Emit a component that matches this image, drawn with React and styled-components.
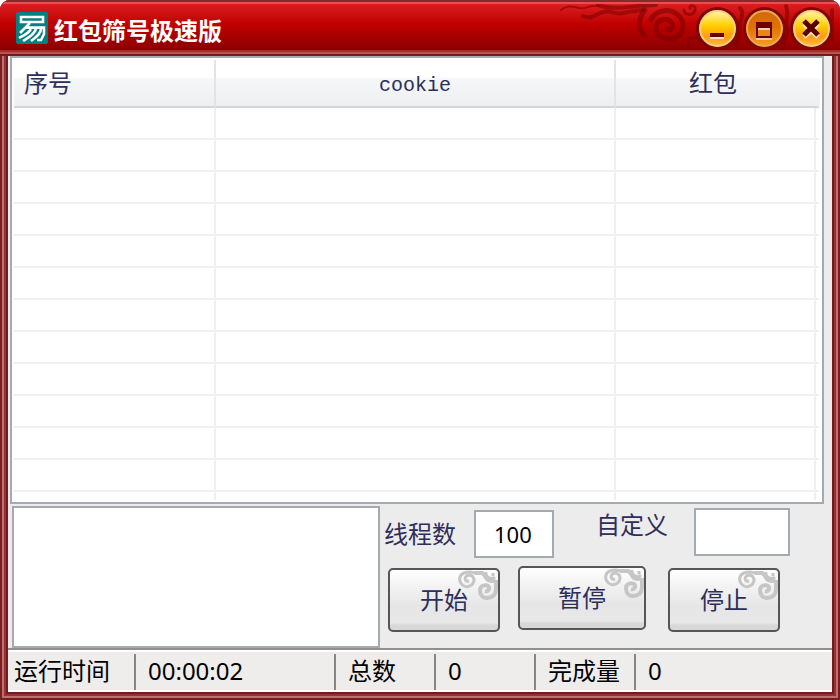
import React, { useState } from 'react';
import styled, { createGlobalStyle } from 'styled-components';

const GlobalStyle = createGlobalStyle`
  *, *::before, *::after {
    box-sizing: border-box;
  }

  body {
    margin: 0;
    background: #fff;
    font-family: 'Noto Sans', 'Noto Sans CJK SC', sans-serif;
  }
`;

const Window = styled.div`
  display: flex;
  flex-direction: column;
  min-height: 100vh;
  padding: 0 8px 8px;
  border-radius: 10px 10px 0 0;
  background: #ececec;
  box-shadow:
    inset 0 0 0 2px #7a1f21,
    inset 0 0 0 4px #bd7072,
    inset 0 0 0 6px #943234,
    inset 0 0 0 8px #741b1d;
`;

const TitleBar = styled.header`
  position: relative;
  display: flex;
  align-items: center;
  gap: 6px;
  height: 56px;
  margin: 0 -8px;
  padding: 0 10px 0 16px;
  border-radius: 10px 10px 0 0;
  overflow: hidden;
  background: linear-gradient(
    #862a2a 0 2px,
    #e25050 2px 4px,
    #d92020 4px,
    #c00000 24px,
    #8c0000 50px,
    #a62c2c 50px 52px,
    #b95353 52px 54px,
    #741b1d 54px
  );
`;

const Ornament = styled.svg`
  position: absolute;
  top: 4px;
  right: 0;
`;

const Title = styled.h1`
  flex: 1;
  margin: 0;
  padding-top: 6px;
  color: #fff;
  font-size: 24px;
  font-weight: 700;
  line-height: 32px;
`;

const WindowButtons = styled.div`
  position: relative;
  display: flex;
  gap: 10px;
`;

const RoundButton = styled.button`
  width: 37px;
  height: 37px;
  padding: 0;
  border: 2px solid ${props => (props.$dim ? '#f0a850' : '#ffd080')};
  border-radius: 50%;
  background: ${props => props.$dim
    ? 'linear-gradient(#d06a10, #e07000 45%, #f59a20)'
    : 'linear-gradient(#fff3a0, #ffd000 40%, #ff9a10 75%, #ffb840)'};
  box-shadow: 0 0 0 3px #7c0808;

  svg {
    display: block;
  }
`;

const ListPanel = styled.section`
  margin: 0 8px 2px 2px;
  padding: 2px;
  border: 2px solid #a3abb1;
  background: #fff;
`;

const List = styled.table`
  width: 100%;
  height: 440px;
  border-collapse: separate;
  border-spacing: 0;
  table-layout: fixed;
`;

const HeadCell = styled.th`
  height: 48px;
  padding: 6px ${props => (props.$last ? '18px' : '10px')} 0 10px;
  border-right: 2px solid ${props => (props.$last ? 'transparent' : '#e4e4e4')};
  border-bottom: 2px solid #d5d5d5;
  background: linear-gradient(#fff 0 18px, #f6f7f9 18px, #eeeff1);
  color: #2e2e5a;
  font-family: 'Liberation Mono', 'Noto Sans CJK SC', monospace;
  font-size: ${props => (props.$latin ? '20px' : '24px')};
  font-weight: 400;
  line-height: 32px;
  text-align: ${props => props.$align || 'center'};
`;

const Cell = styled.td`
  height: 32px;
  padding: 0;
  border-right: 2px solid ${props => (props.$open ? 'transparent' : '#f0f0f0')};
  border-bottom: 2px solid #f0f0f0;
`;

const TailCell = styled(Cell)`
  height: 8px;
  border-bottom: 0;
`;

const Panel = styled.section`
  display: flex;
  gap: 4px;
  padding-left: 4px;
`;

const Log = styled.textarea`
  flex: 0 1 368px;
  height: 142px;
  border: 2px solid #a3abb1;
  background: #fff;
  resize: none;
  outline: none;
`;

const Controls = styled.form`
  flex: 1;
  display: flex;
  flex-direction: column;
  gap: 8px;
  padding-top: 2px;
`;

const FieldRow = styled.div`
  display: flex;
  align-items: flex-end;
  gap: 42px;
  height: 50px;
`;

const Field = styled.div`
  display: flex;
  align-items: ${props => (props.$raised ? 'flex-start' : 'center')};
  align-self: ${props => (props.$raised ? 'flex-start' : 'auto')};
  gap: ${props => (props.$raised ? '26px' : '18px')};
`;

const Label = styled.label`
  color: #2e2e5a;
  font-size: 24px;
  line-height: 34px;
`;

const TextBox = styled.input`
  width: ${props => props.$width};
  height: 48px;
  padding: 0 18px;
  border: 2px solid #a3abb1;
  background: #fff;
  color: #000;
  font-family: inherit;
  font-size: 22px;
  outline: none;
`;

const ButtonRow = styled.div`
  display: flex;
  align-items: flex-end;
  height: 66px;
  padding-left: 4px;
`;

const ActionButton = styled.button`
  position: relative;
  width: ${props => (props.$wide ? '128px' : '112px')};
  height: 64px;
  margin-right: ${props => (props.$wide ? '22px' : '18px')};
  align-self: ${props => (props.$wide ? 'flex-start' : 'auto')};
  padding: 0;
  border: 2px solid #565656;
  border-radius: 5px;
  background: linear-gradient(#fff, #f2f2f2 30%, #e6e6e6 60%, #e8e8e8 88%, #d8d8d8 92%);
  color: #2e2e5a;
  font-family: inherit;
  font-size: 24px;
  line-height: 32px;
`;

const Curl = styled.svg`
  position: absolute;
  top: 0;
  right: 0;
`;

const StatusBar = styled.footer`
  display: flex;
  height: 44px;
  margin-top: auto;
  padding: 4px 0 0;
  border-top: 2px solid #8f8f8f;
  border-bottom: 2px solid #fff;
  background: #efedec;
  box-shadow: inset 0 2px #fff;
`;

const StatusItem = styled.span`
  width: ${props => props.$width};
  padding-left: ${props => (props.$first ? '6px' : '12px')};
  border-right: ${props => (props.$width ? '2px solid #868686' : '0')};
  color: #000;
  font-size: 24px;
  line-height: 34px;
  white-space: nowrap;
`;

const AppIcon = () => (
  <svg width="32" height="32" viewBox="0 0 16 16" fill="none" stroke="#fff" aria-hidden="true">
    <path d="M0 .5h.5V0h15v.5h.5v15h-.5v.5H.5v-.5H0z" fill="#008080" stroke="none" />
    <path d="M2.5 2.5h11v2.5h-11z" strokeWidth="1.3" />
    <path d="M7 5.5L2 10.5M5 7.8h9v3.2l-1.5 3h-2M7.5 8.5C6 11 4 11.5 1.5 13M10 8.5C9 11.5 6 13 3.5 14.5M12.5 8.5C12 12 9 13 7.5 14.5" strokeWidth="1.3" />
  </svg>
);

// cloud pattern behind the window buttons
const TitleOrnament = () => (
  <Ornament width="280" height="46" viewBox="560 4 280 46" fill="none" stroke="#7c0000" strokeOpacity="0.55" strokeLinecap="round" strokeLinejoin="round" aria-hidden="true">
    <path d="M561 10c5-5 12-4 18-2s12-4 20-2" strokeWidth="2" />
    <path d="M583 16c10 4 12-2 20-4s12 3 20 1 12-2 20-3" strokeWidth="4" />
    <path d="M598 5c12 4 24 3 40 1l18-1" strokeWidth="4" />
    <path d="M644 35c-6-7-6-17 1-25" strokeWidth="5" />
    <path d="M651 20c4-10 18-12 26-6s8 18 0 23-21 0-21-9 11-11 15-6 0 9-4 7" strokeWidth="5" />
    <path d="M684 10c0 6 10 6 11 0s-6-5-5-2M688 46c-3-8 8-12 12-5" strokeWidth="3" />
    <path d="M740 8c6 6-2 12 0 20s-4 10-4 18M786 6c4 10-2 14 1 22s-6 12-4 20M832 10v30" strokeWidth="4" />
  </Ornament>
);

const ButtonCurl = () => (
  <Curl width="40" height="32" viewBox="0 0 40 32" fill="none" stroke="#c6c6c6" strokeWidth="3" aria-hidden="true">
    <path d="M11 11c-3 1-5-2-3-4.500s8-1.500 8 3.500-7 9-11.500 5-3.500-10 1.500-12 7-1 10 0" />
    <path d="M16 3h8c3 1 3 5 6 7 4 2 6 0 7 2" strokeWidth="4" />
    <path d="M28 2c-1 6 6 8 9 5M35 3v3" />
    <path d="M38 10v9c0 6-4 9-9 9s-7-4-7-8 5-6 8-4 0 6-3 5" strokeWidth="4" />
  </Curl>
);

const statusItems = [
  { text: '运行时间', width: '128px' },
  { text: '00:00:02', width: '200px' },
  { text: '总数', width: '100px' },
  { text: '0', width: '100px' },
  { text: '完成量', width: '100px' },
  { text: '0' },
];

const App = () => {
  const [log, setLog] = useState('');
  const [threads, setThreads] = useState('100');
  const [custom, setCustom] = useState('');

  return (
    <>
      <GlobalStyle />
      <Window>
        <TitleBar>
          <TitleOrnament />
          <AppIcon />
          <Title>红包筛号极速版</Title>
          <WindowButtons>
            <RoundButton aria-label="最小化">
              <svg width="33" height="33" viewBox="0 0 33 33">
                <path d="M9 21h14v4H9z" fill="#6a0000" />
                <path d="M9 25h14v2H9z" fill="#ffe0b0" />
              </svg>
            </RoundButton>
            <RoundButton $dim aria-label="最大化">
              <svg width="33" height="33" viewBox="0 0 33 33">
                <path d="M8 10h16v16H8z" fill="#6a0000" />
                <path d="M10 16h12v2H10zM8 26h16v2H8z" fill="#f0d0b0" />
                <path d="M10 18h12v6H10z" fill="#e88810" />
              </svg>
            </RoundButton>
            <RoundButton aria-label="关闭">
              <svg width="33" height="33" viewBox="0 0 33 33">
                <path d="M9 12l14 13M23 12L9 25" stroke="#ffe8c0" strokeWidth="5" />
                <path d="M9 9l14 14M23 9L9 23" stroke="#5a0000" strokeWidth="5" />
              </svg>
            </RoundButton>
          </WindowButtons>
        </TitleBar>

        <ListPanel>
          <List>
            <colgroup>
              <col style={{ width: 202 }} />
              <col style={{ width: 400 }} />
              <col />
              <col style={{ width: 4 }} />
            </colgroup>
            <thead>
              <tr>
                <HeadCell $align="left">序号</HeadCell>
                <HeadCell $latin>cookie</HeadCell>
                <HeadCell $last colSpan={2}>红包</HeadCell>
              </tr>
            </thead>
            <tbody>
              {Array.from({ length: 12 }, (_, i) => (
                <tr key={i}>
                  <Cell />
                  <Cell />
                  <Cell />
                  <Cell $open />
                </tr>
              ))}
              <tr>
                <TailCell />
                <TailCell />
                <TailCell />
                <TailCell $open />
              </tr>
            </tbody>
          </List>
        </ListPanel>

        <Panel>
          <Log aria-label="日志" value={log} onChange={e => setLog(e.target.value)} />
          <Controls onSubmit={e => e.preventDefault()}>
            <FieldRow>
              <Field>
                <Label htmlFor="threads">线程数</Label>
                <TextBox id="threads" $width="80px" value={threads} onChange={e => setThreads(e.target.value)} />
              </Field>
              <Field $raised>
                <Label htmlFor="custom">自定义</Label>
                <TextBox id="custom" $width="96px" value={custom} onChange={e => setCustom(e.target.value)} />
              </Field>
            </FieldRow>
            <ButtonRow>
              <ActionButton type="button">开始<ButtonCurl /></ActionButton>
              <ActionButton type="button" $wide>暂停<ButtonCurl /></ActionButton>
              <ActionButton type="button">停止<ButtonCurl /></ActionButton>
            </ButtonRow>
          </Controls>
        </Panel>

        <StatusBar>
          {statusItems.map((item, i) => (
            <StatusItem key={i} $first={i === 0} $width={item.width}>
              {item.text}
            </StatusItem>
          ))}
        </StatusBar>
      </Window>
    </>
  );
};

export default App;
